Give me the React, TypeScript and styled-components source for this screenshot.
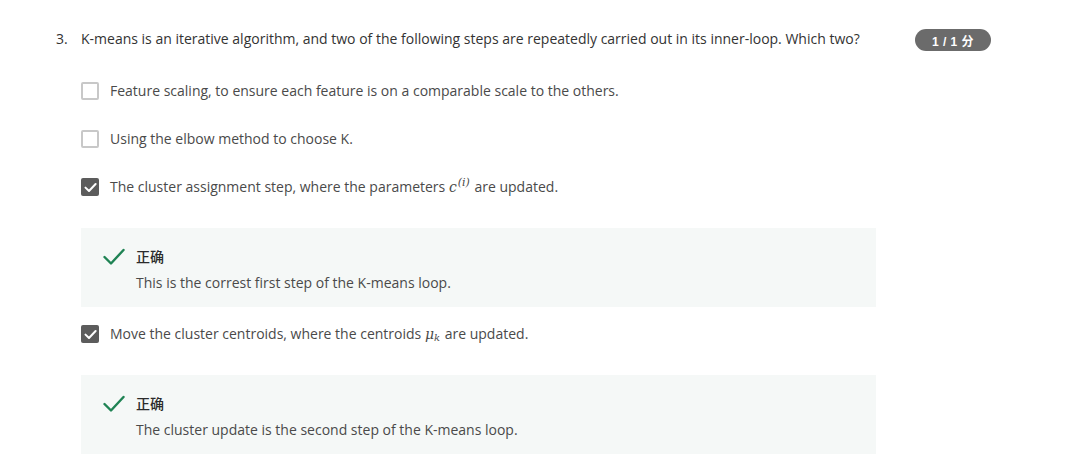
import React from "react";
import styled, { createGlobalStyle } from "styled-components";

const Global = createGlobalStyle`
  html, body { margin: 0; padding: 0; background: #fff; }
  body { font-family: "Open Sans", "Noto Sans CJK SC", sans-serif; }
`;

const Page = styled.div`
  width: 1086px;
  height: 474px;
  overflow: hidden;
  box-sizing: border-box;
  padding: 29px 0 0 56px;
`;

const QuestionRow = styled.div`
  display: flex;
  align-items: flex-start;
  width: 935px;
`;

const Num = styled.div`
  width: 25px;
  font-size: 14px;
  line-height: 20px;
  color: #333;
`;

const QText = styled.div`
  flex: 1;
  font-size: 14px;
  line-height: 20px;
  color: #333;
`;

const Badge = styled.div`
  width: 76px;
  height: 22px;
  border-radius: 11px;
  background: #6b6b6b;
  color: #fff;
  font-size: 12px;
  font-weight: 700;
  display: flex;
  align-items: center;
  justify-content: center;
  font-family: "Liberation Sans", "Noto Sans CJK SC", sans-serif;
  letter-spacing: 0.5px;
`;

const Options = styled.div`
  margin-left: 25px;
  margin-top: 30px;
  display: flex;
  flex-direction: column;
  width: 795px;
`;

const Option = styled.div<{ $gap: number }>`
  display: flex;
  align-items: center;
  height: 20px;
  margin-bottom: ${(p) => p.$gap}px;
`;

const Box = styled.div<{ $checked: boolean }>`
  width: 18px;
  height: 18px;
  box-sizing: border-box;
  border-radius: 2px;
  border: ${(p) => (p.$checked ? "none" : "2px solid #c8c8c8")};
  background: ${(p) => (p.$checked ? "#5c5c5c" : "#fff")};
  display: flex;
  align-items: center;
  justify-content: center;
  margin-right: 11px;
  flex-shrink: 0;
`;

const OptText = styled.div`
  font-size: 14px;
  line-height: 20px;
  height: 20px;
  color: #4a4a4a;
  white-space: nowrap;
`;

const MathExpr = styled.span`
  font-family: "DejaVu Serif", "Liberation Serif", serif;
  font-style: italic;
  font-size: 14px;
  line-height: 0;
  margin: 0 1px 0 0;
`;

const Sup = styled.sup`
  font-size: 11px;
  font-style: italic;
  line-height: 0;
  vertical-align: 0;
  position: relative;
  top: -6px;
  margin-left: 1px;
`;

const Sub = styled.sub`
  font-size: 10px;
  font-style: italic;
  line-height: 0;
  vertical-align: 0;
  position: relative;
  top: 2px;
`;

const Feedback = styled.div<{ $after: number }>`
  background: #f5f8f7;
  height: 79px;
  box-sizing: border-box;
  padding: 18px 0 0 22px;
  display: flex;
  margin-bottom: ${(p) => p.$after}px;
`;

const FbIcon = styled.div`
  width: 22px;
  margin-right: 11px;
  padding-top: 2px;
`;

const FbBody = styled.div`
  display: flex;
  flex-direction: column;
`;

const FbTitle = styled.div`
  font-size: 14px;
  line-height: 20px;
  font-weight: 500;
  color: #2b2b2b;
  font-family: "Noto Sans CJK SC", sans-serif;
`;

const FbText = styled.div`
  font-size: 14px;
  line-height: 20px;
  margin-top: 7px;
  color: #4a4a4a;
`;

const Check = () => (
  <svg width="13" height="11" viewBox="0 0 13 11">
    <path d="M1.5 5.6 L5 9 L11.6 2" fill="none" stroke="#fff" strokeWidth="2" strokeLinecap="round" strokeLinejoin="round" />
  </svg>
);

const GreenCheck = () => (
  <svg width="22" height="18" viewBox="0 0 22 18">
    <path d="M1.5 9 L8 15.5 L20.5 2" fill="none" stroke="#1f8354" strokeWidth="2.4" strokeLinecap="round" strokeLinejoin="round" />
  </svg>
);

const FeedbackBox = ({ text, after }: { text: string; after: number }) => (
  <Feedback $after={after}>
    <FbIcon>
      <GreenCheck />
    </FbIcon>
    <FbBody>
      <FbTitle>正确</FbTitle>
      <FbText>{text}</FbText>
    </FbBody>
  </Feedback>
);

export default function App() {
  return (
    <>
      <Global />
      <Page>
        <QuestionRow>
          <Num>3.</Num>
          <QText>
            K-means is an iterative algorithm, and two of the following steps are repeatedly carried out in its inner-loop. Which two?
          </QText>
          <Badge>1 / 1 分</Badge>
        </QuestionRow>
        <Options>
          <Option $gap={28}>
            <Box $checked={false} />
            <OptText>Feature scaling, to ensure each feature is on a comparable scale to the others.</OptText>
          </Option>
          <Option $gap={28}>
            <Box $checked={false} />
            <OptText>Using the elbow method to choose K.</OptText>
          </Option>
          <Option $gap={31}>
            <Box $checked>
              <Check />
            </Box>
            <OptText>
              The cluster assignment step, where the parameters{" "}
              <MathExpr>
                c<Sup>(i)</Sup>
              </MathExpr>{" "}
              are updated.
            </OptText>
          </Option>
          <FeedbackBox text="This is the correst first step of the K-means loop." after={17} />
          <Option $gap={31}>
            <Box $checked>
              <Check />
            </Box>
            <OptText>
              Move the cluster centroids, where the centroids{" "}
              <MathExpr>
                μ<Sub>k</Sub>
              </MathExpr>{" "}
              are updated.
            </OptText>
          </Option>
          <FeedbackBox text="The cluster update is the second step of the K-means loop." after={0} />
        </Options>
      </Page>
    </>
  );
}
